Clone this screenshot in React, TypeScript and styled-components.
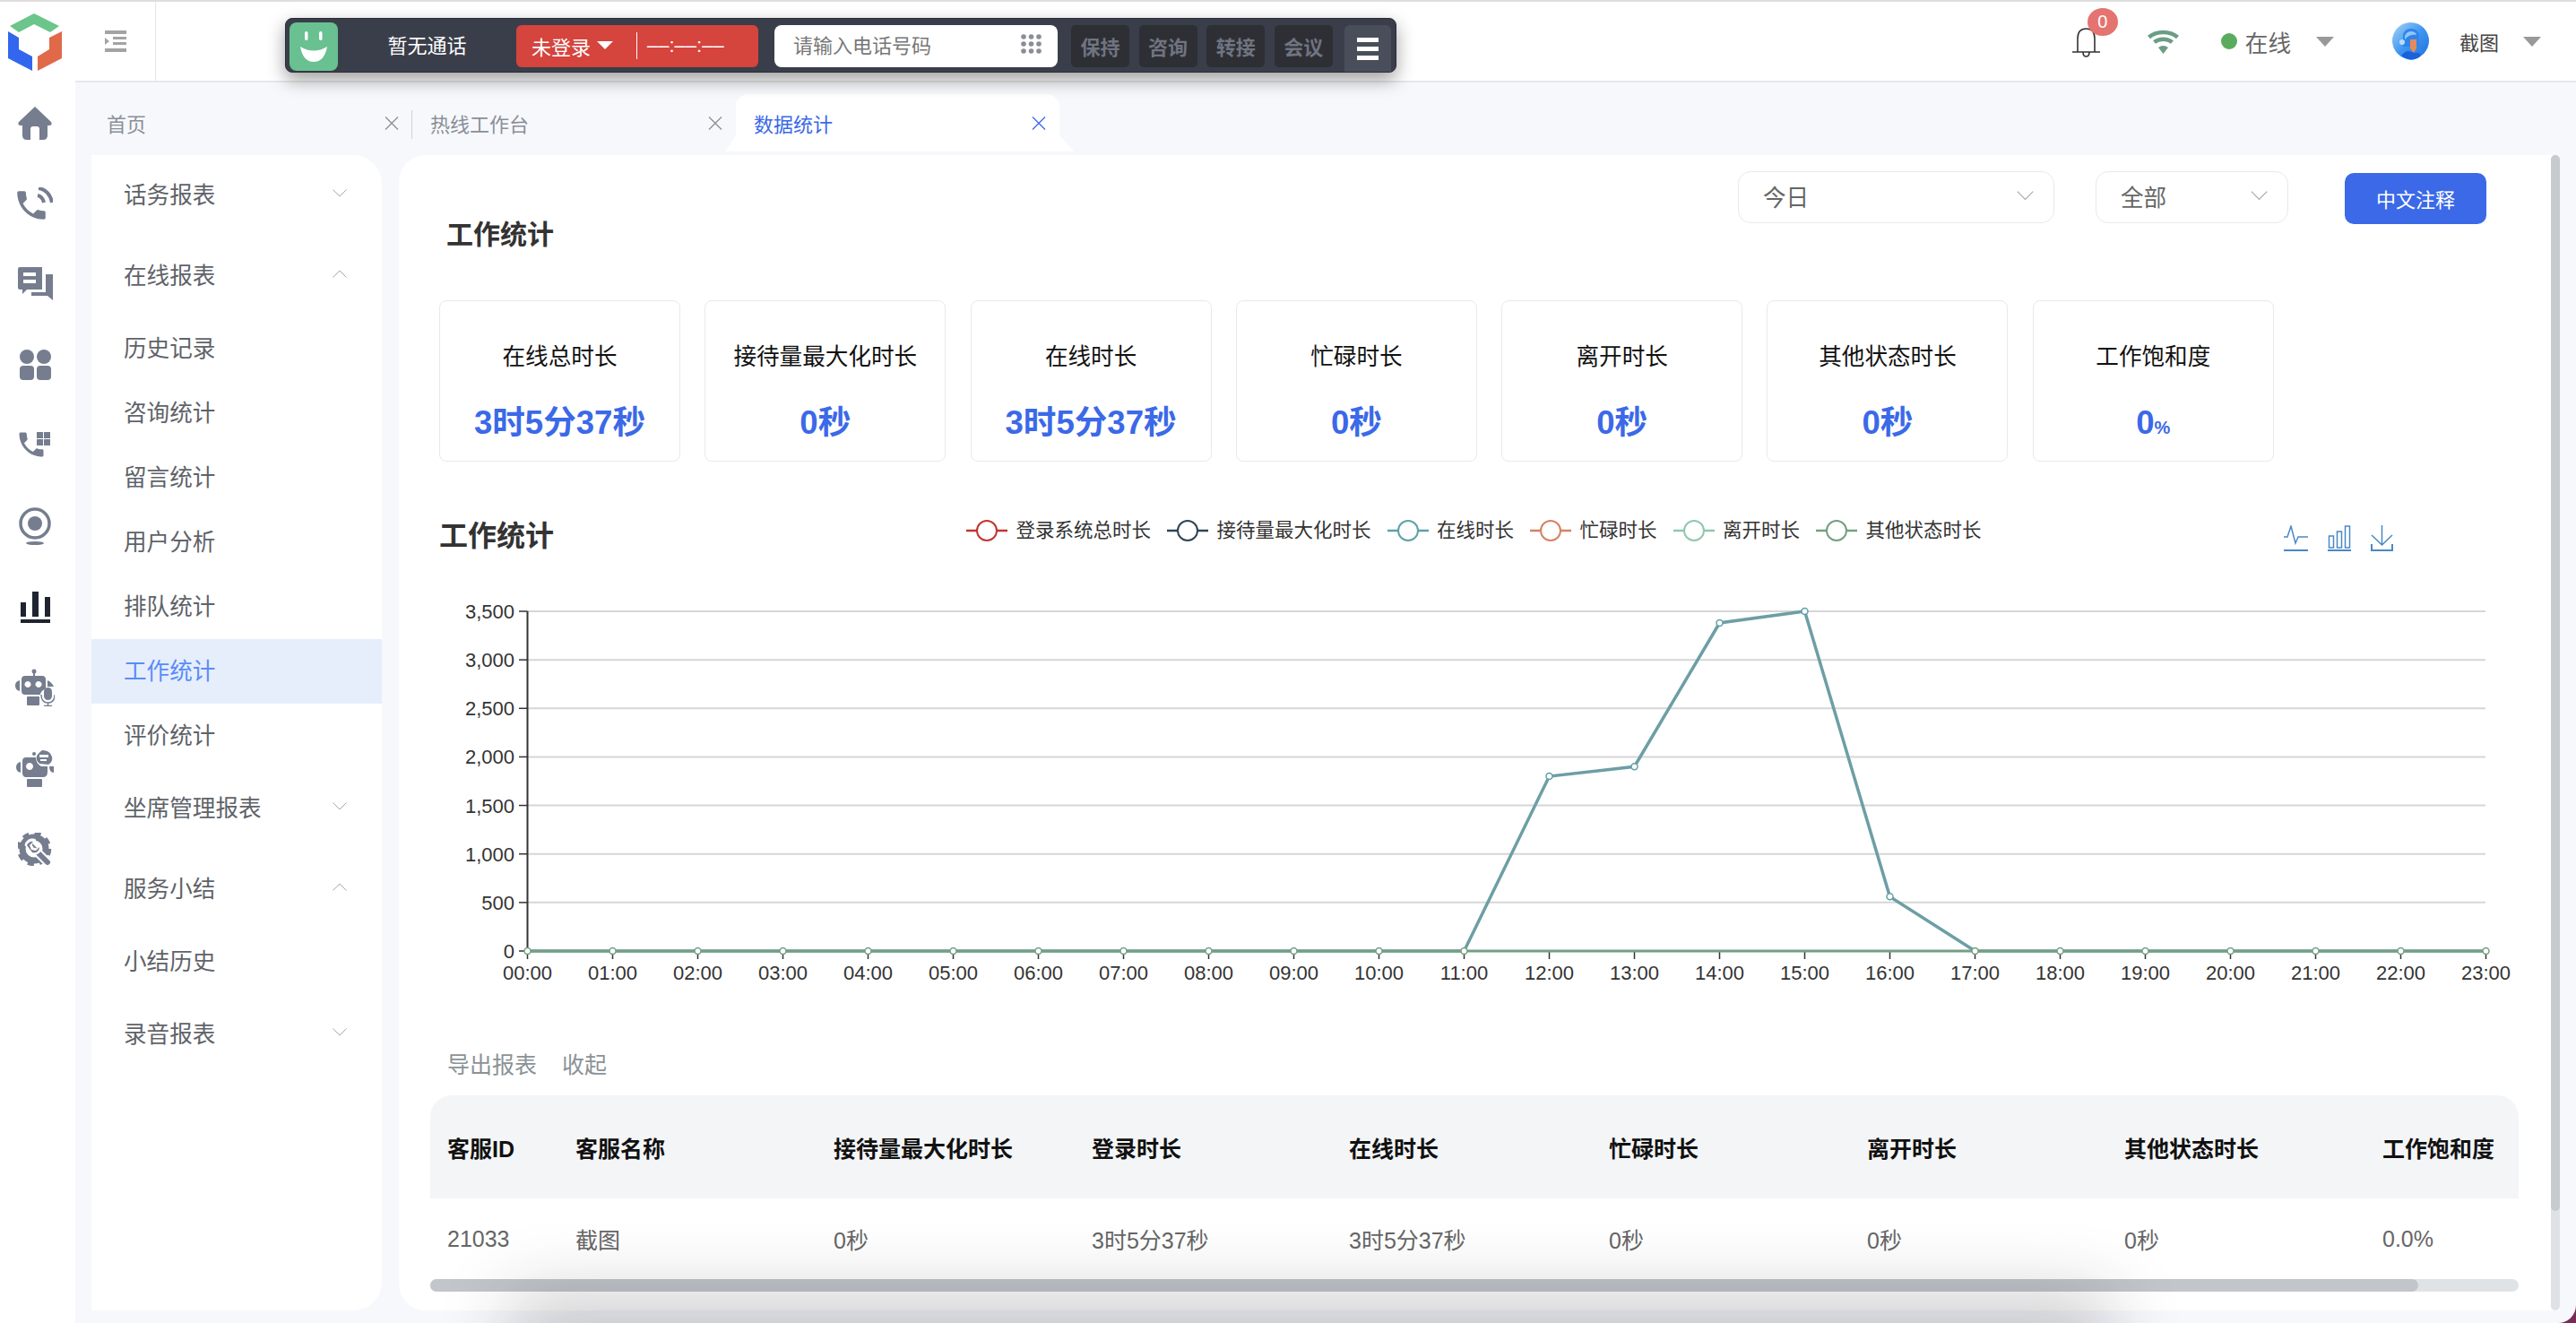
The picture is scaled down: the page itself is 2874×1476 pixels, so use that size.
import styled, { createGlobalStyle } from "styled-components";

const GlobalStyle = createGlobalStyle`
  html, body {
    margin: 0;
    padding: 0;
    background: #7a2a55;
    font-family: "Liberation Sans", "Noto Sans CJK SC", sans-serif;
  }
  * { box-sizing: border-box; }
`;

const Shell = styled.div`
  position: relative;
  width: 2874px;
  height: 1476px;
  display: flex;
  overflow: hidden;
  border-top: 2px solid #dedede;
  border-bottom-right-radius: 20px;
  background: #f7f8fc;
`;
const Rail = styled.aside`
  width: 84px;
  flex: none;
  background: #fff;
`;
const RailSlot = styled.div`
  height: 90px;
  display: flex;
  align-items: center;
  justify-content: center;
  padding-right: 6px;
`;
const Right = styled.div`
  flex: 1;
  min-width: 0;
  display: flex;
  flex-direction: column;
`;
const Header = styled.header`
  height: 90px;
  flex: none;
  display: flex;
  align-items: center;
  padding-right: 39px;
  background: #fff;
  border-bottom: 2px solid #e8e8e8;
`;
const Collapse = styled.div`
  width: 90px;
  height: 100%;
  display: flex;
  align-items: center;
  justify-content: center;
  border-right: 1px solid #e6e6e6;
`;
const PhoneBar = styled.div`
  position: relative;
  z-index: 2;
  align-self: flex-start;
  display: flex;
  align-items: center;
  width: 1240px;
  height: 61px;
  margin: 18px 0 0 144px;
  padding: 2px 0 0 4px;
  border-radius: 8px;
  background: #3a3e4a;
  border: 1px solid #2a2d36;
  box-shadow: 0 8px 20px rgba(0, 0, 0, 0.38);
`;
const Smiley = styled.div`
  width: 54px;
  height: 54px;
  flex: none;
  display: flex;
  align-items: center;
  justify-content: center;
  border-radius: 8px;
  background: #69c090;
`;
const CallState = styled.div`
  width: 199px;
  text-align: center;
  color: #fff;
  font-size: 22px;
  line-height: 30px;
`;
const LoginBox = styled.div`
  width: 270px;
  height: 47px;
  flex: none;
  display: flex;
  align-items: center;
  padding: 0 0 2px 17px;
  border-radius: 6px;
  background: #d5443d;
  color: #fff;
  font-size: 22px;
`;
const LoginCaret = styled.span`
  width: 0;
  height: 0;
  margin-left: 7px;
  border-left: 9px solid transparent;
  border-right: 9px solid transparent;
  border-top: 9px solid #fff;
`;
const LoginSplit = styled.span`
  width: 1px;
  height: 30px;
  margin: 0 11px 0 26px;
  background: #fff;
`;
const Timer = styled.span`
  font-size: 22px;
`;
const PhoneInput = styled.div`
  width: 316px;
  height: 47px;
  flex: none;
  margin-left: 18px;
  display: flex;
  align-items: center;
  justify-content: space-between;
  padding: 0 18px 6px 21px;
  border-radius: 8px;
  background: #fff;
  color: #777;
  font-size: 22px;
`;
const BarButtons = styled.div`
  display: flex;
  gap: 10.6px;
  margin-left: 15px;
`;
const BarButton = styled.div`
  width: 65px;
  height: 47px;
  display: flex;
  align-items: center;
  justify-content: center;
  padding-bottom: 2px;
  border-radius: 5px;
  background: #2e2f35;
  color: #6f7480;
  font-size: 22px;
  font-weight: 700;
`;
const MenuButton = styled.div`
  width: 52px;
  height: 52px;
  flex: none;
  align-self: flex-end;
  margin-left: 13px;
  display: flex;
  flex-direction: column;
  align-items: center;
  justify-content: center;
  gap: 5px;
  border-radius: 6px 6px 0 0;
  background: #4a4e5a;
  span {
    width: 24px;
    height: 5px;
    background: #fff;
  }
`;
const HeaderTools = styled.div`
  margin-left: auto;
  display: flex;
  align-items: center;
`;
const BellWrap = styled.div`
  position: relative;
  width: 31px;
  height: 33px;
  margin-top: 2px;
`;
const Badge = styled.span`
  position: absolute;
  left: 17px;
  top: -22px;
  width: 34px;
  height: 31px;
  border-radius: 50%;
  background: #e5736f;
  color: #fff;
  font-size: 20px;
  line-height: 31px;
  text-align: center;
`;
const IconSlot = styled.span<{ $gap: number }>`
  display: flex;
  margin-left: ${(p) => p.$gap}px;
`;
const StatusDot = styled.span`
  width: 18px;
  height: 18px;
  margin-left: 47px;
  border-radius: 50%;
  background: #5bab5f;
`;
const StatusText = styled.span`
  margin-left: 9px;
  color: #666;
  font-size: 25.6px;
`;
const Caret = styled.span<{ $gap: number }>`
  width: 0;
  height: 0;
  margin-left: ${(p) => p.$gap}px;
  border-left: 10px solid transparent;
  border-right: 10px solid transparent;
  border-top: 11px solid #999;
`;
const UserName = styled.span`
  margin-left: 33px;
  color: #444;
  font-size: 22px;
`;
const TabsRow = styled.nav`
  position: relative;
  z-index: 0;
  height: 81px;
  flex: none;
  display: flex;
  align-items: flex-start;
  padding: 13px 0 0 15px;
`;
const Tab = styled.div<{ $active?: boolean; $split?: boolean }>`
  position: relative;
  width: 361px;
  height: 64px;
  display: flex;
  align-items: center;
  justify-content: space-between;
  padding: 0 15px 0 20px;
  font-size: 22px;
  color: ${(p) => (p.$active ? "#3b69e8" : "#8a8f99")};
  background: ${(p) => (p.$active ? "#fff" : "transparent")};
  border-radius: ${(p) => (p.$active ? "14px 14px 0 0" : "0")};
  ${(p) =>
    p.$split &&
    `&::after {
      content: "";
      position: absolute;
      right: 0;
      top: 18px;
      width: 1px;
      height: 32px;
      background: #cfd2d8;
    }`}
  ${(p) =>
    p.$active &&
    `&::before {
      content: "";
      position: absolute;
      left: -12px;
      right: -16px;
      bottom: 0;
      height: 18px;
      z-index: -1;
      background: #fff;
      clip-path: polygon(0 100%, 12px 0, calc(100% - 16px) 0, 100% 100%);
    }`}
`;
const Content = styled.div`
  flex: 1;
  min-height: 0;
  display: flex;
  padding: 0 18px 14px 18px;
  gap: 19px;
`;
const SideMenu = styled.div`
  width: 324px;
  flex: none;
  display: flex;
  flex-direction: column;
  border-radius: 0 32px 32px 0;
  background: #fff;
`;
const MenuHead = styled.div`
  height: 72px;
  margin: 9px 0;
  display: flex;
  align-items: center;
  justify-content: space-between;
  padding: 0 39px 6px 36px;
  color: #5f6369;
  font-size: 25.6px;
`;
const MenuItem = styled.div<{ $active?: boolean }>`
  height: 72px;
  display: flex;
  align-items: center;
  padding: 0 0 6px 36px;
  font-size: 25.6px;
  color: ${(p) => (p.$active ? "#5a8cf8" : "#5f6369")};
  background: ${(p) => (p.$active ? "#e6eefc" : "transparent")};
`;
const MainCard = styled.main`
  position: relative;
  flex: 1;
  min-width: 0;
  padding: 18px 0 0 45px;
  border-radius: 30px 0 0 30px;
  background: #fff;
`;
const VScroll = styled.div`
  position: absolute;
  top: 0;
  right: 0;
  bottom: 0;
  width: 10px;
  border-radius: 5px;
  background: #dfe2e5;
  &::before {
    content: "";
    display: block;
    height: 1178px;
    border-radius: 5px;
    background: #c6cbcf;
  }
`;
const TopRow = styled.div`
  height: 91px;
  display: flex;
  align-items: flex-start;
  padding-right: 82px;
`;
const PageTitle = styled.h1`
  margin: 51px auto 0 8px;
  color: #333;
  font-size: 30px;
  font-weight: 600;
  line-height: 40px;
`;
const SelectBox = styled.div<{ $w: number }>`
  width: ${(p) => p.$w}px;
  height: 58px;
  margin-right: ${(p) => (p.$w > 300 ? 46 : 63)}px;
  display: flex;
  align-items: center;
  justify-content: space-between;
  padding: 0 22px 3px 27px;
  border: 1px solid #e8e8ea;
  border-radius: 14px;
  color: #666;
  font-size: 25.6px;
`;
const NoteButton = styled.div`
  width: 158px;
  height: 57px;
  margin-top: 2px;
  display: flex;
  align-items: center;
  justify-content: center;
  padding-bottom: 2px;
  border-radius: 10px;
  background: #3b69e8;
  color: #fff;
  font-size: 22px;
`;
const StatRow = styled.div`
  margin-top: 53px;
  display: flex;
  gap: 27.3px;
`;
const StatCard = styled.div`
  width: 269px;
  height: 180px;
  display: flex;
  flex-direction: column;
  align-items: center;
  padding-top: 44px;
  border: 1px solid #e9e9ec;
  border-radius: 8px;
`;
const StatLabel = styled.div`
  color: #111;
  font-size: 25.6px;
  line-height: 36px;
`;
const StatValue = styled.div`
  margin-top: 34px;
  color: #3b69e8;
  font-size: 36.6px;
  font-weight: 600;
  line-height: 44px;
  small {
    font-size: 20px;
  }
`;
const ChartHead = styled.div`
  margin-top: 55px;
  height: 60px;
  display: flex;
  align-items: center;
`;
const ChartTitle = styled.h2`
  margin: -4px 0 0 0;
  color: #333;
  font-size: 32px;
  font-weight: 600;
  line-height: 42px;
`;
const Legend = styled.div`
  margin: -16px 0 0 460px;
  display: flex;
  gap: 18px;
`;
const LegendItem = styled.div`
  display: flex;
  align-items: center;
  gap: 9.5px;
  color: #333;
  font-size: 21.5px;
  line-height: 28px;
`;
const ToolIcons = styled.div`
  margin: 0 186px 0 auto;
  display: flex;
  gap: 22px;
`;
const ChartCanvas = styled.svg`
  display: block;
  width: 2366px;
  height: 530px;
  text {
    font-family: "Liberation Sans", sans-serif;
    font-size: 22px;
    fill: #333;
  }
`;
const ExportRow = styled.div`
  margin: 11px 0 0 9px;
  display: flex;
  gap: 28px;
  color: #8a9296;
  font-size: 25px;
  line-height: 34px;
`;
const TableWrap = styled.div`
  width: 2330px;
  margin: 17px 0 0 -10px;
`;
const StatTable = styled.table`
  width: 100%;
  table-layout: fixed;
  border-collapse: collapse;
  th, td {
    padding: 0 0 0 19px;
    text-align: left;
    font-size: 25px;
    white-space: nowrap;
  }
  th {
    height: 115px;
    background: #f4f5f7;
    color: #111;
    font-weight: 700;
  }
  th:first-child { border-top-left-radius: 24px; }
  th:last-child { border-top-right-radius: 24px; }
  td {
    height: 90px;
    color: #666;
  }
`;
const HScroll = styled.div`
  height: 14px;
  border-radius: 7px;
  background: #e0e3e6;
  &::before {
    content: "";
    display: block;
    width: 2218px;
    height: 14px;
    border-radius: 7px;
    background: #c2c6cb;
  }
`;
const BottomGlow = styled.div`
  position: absolute;
  left: 620px;
  right: 570px;
  top: 1500px;
  height: 60px;
  box-shadow: 0 -8px 80px 50px rgba(30, 34, 40, 0.22);
  pointer-events: none;
`;

const handset =
  "M6.62 10.79c1.44 2.83 3.76 5.14 6.59 6.59l2.2-2.2c.27-.27.67-.36 1.02-.24 1.12.37 2.33.57 3.57.57.55 0 1 .45 1 1V20c0 .55-.45 1-1 1-9.39 0-17-7.61-17-17 0-.55.45-1 1-1h3.5c.55 0 1 .45 1 1 0 1.25.2 2.45.57 3.57.11.35.03.74-.25 1.02l-2.2 2.2z";

const railGrey = "#757d8f";

function Logo() {
  return (
    <svg width="60" height="64" viewBox="0 0 60 64">
      <path d="M29 0 57 14 47 21 29 12 12 21 2 14Z" fill="#6cc58a" />
      <path d="M0 20 12 27V40L27 48V64L0 50Z" fill="#3366ee" />
      <path d="M60 20V50L33 64V48L46 40V27Z" fill="#e0694a" />
    </svg>
  );
}

function CollapseIcon() {
  return (
    <svg width="24" height="24" viewBox="0 0 24 24" fill="#a3a3a3">
      <rect x="0" y="0" width="24" height="4" />
      <rect x="9" y="7" width="15" height="3" />
      <rect x="9" y="13" width="15" height="3" />
      <rect x="0" y="20" width="24" height="4" />
      <path d="M0 8 5 12 0 16Z" />
    </svg>
  );
}

function HomeIcon() {
  return (
    <svg width="38" height="37" viewBox="0 0 38 37" fill={railGrey}>
      <path d="M19 0 37 17Q39 21 35 21H33V32Q33 37 28 37H24V25Q24 22 21 22H17Q14 22 14 25V37H10Q5 37 5 32V21H3Q-1 21 1 17Z" />
    </svg>
  );
}

function CallRingIcon() {
  return (
    <svg width="40" height="37" viewBox="0 0 40 37" fill="none">
      <g transform="translate(-5 -1) scale(1.75)">
        <path d={handset} fill={railGrey} />
      </g>
      <path d="M23 9C27 10 29 12 30 17M24 1C32 2 38 9 39 17" stroke={railGrey} strokeWidth="4" />
    </svg>
  );
}

function ChatIcon() {
  return (
    <svg width="39" height="38" viewBox="0 0 39 38" fill={railGrey}>
      <path
        fillRule="evenodd"
        d="M2 0H27V25H10L5 30V25H2Q0 25 0 23V2Q0 0 2 0ZM6 6V10H20V6ZM6 14V18H20V14Z"
      />
      <path d="M31 8H39V37L33 32H15V28H31Z" />
    </svg>
  );
}

function AppsIcon() {
  return (
    <svg width="35" height="34" viewBox="0 0 35 34" fill={railGrey}>
      <circle cx="8" cy="8" r="8" />
      <circle cx="27" cy="8" r="8" />
      <rect x="0" y="18" width="16" height="16" rx="4" />
      <rect x="19" y="18" width="16" height="16" rx="4" />
    </svg>
  );
}

function CallGridIcon() {
  return (
    <svg width="36" height="32" viewBox="0 0 36 32" fill={railGrey}>
      <g transform="translate(-4 -3) scale(1.5)">
        <path d={handset} />
      </g>
      <rect x="20" y="1" width="7" height="7" />
      <rect x="28" y="1" width="7" height="7" />
      <rect x="20" y="9" width="7" height="7" />
      <rect x="28" y="9" width="7" height="7" />
    </svg>
  );
}

function CameraIcon() {
  return (
    <svg width="36" height="42" viewBox="0 0 36 42" fill={railGrey}>
      <circle cx="18" cy="18" r="16" fill="none" stroke={railGrey} strokeWidth="3.5" />
      <circle cx="18" cy="18" r="8" />
      <ellipse cx="18" cy="40" rx="10" ry="2" />
    </svg>
  );
}

function BarsIcon() {
  return (
    <svg width="33" height="35" viewBox="0 0 33 35" fill="#1f2430">
      <rect x="0" y="12" width="6" height="16" />
      <rect x="13" y="0" width="7" height="28" />
      <rect x="27" y="6" width="6" height="22" />
      <rect x="0" y="31" width="33" height="4" />
    </svg>
  );
}

function RobotMicIcon() {
  return (
    <svg width="44" height="42" viewBox="0 0 44 42" fill={railGrey}>
      <circle cx="21" cy="3" r="2.5" />
      <rect x="20" y="4" width="2" height="5" />
      <path
        fillRule="evenodd"
        d="M11 8H30Q34 8 34 12V22Q30 24 28 28V29H11Q7 29 7 25V12Q7 8 11 8ZM14 14A3.5 3.5 0 1 0 14.01 14ZM26 14A3.5 3.5 0 1 0 26.01 14Z"
      />
      <path d="M5 13V25Q0 24 0 19T5 13ZM36 13Q40 14 43 20H36Z" />
      <rect x="13" y="31" width="14" height="10" rx="1" />
      <rect x="32" y="21" width="9" height="14" rx="4.5" />
      <path d="M29 29Q29 38 36.5 38T44 29M36.5 38V41M32 41.5H41" fill="none" stroke={railGrey} strokeWidth="1.5" />
    </svg>
  );
}

function RobotChatIcon() {
  return (
    <svg width="42" height="41" viewBox="0 0 42 41" fill={railGrey}>
      <path
        fillRule="evenodd"
        d="M11 8H22Q22 15 28 18H35V24Q35 30 30 30H11Q7 30 7 25V12Q7 8 11 8ZM15 14A4 4 0 1 0 15.01 14Z"
      />
      <path d="M5 13V25Q0 24 0 19T5 13ZM37 18H42V25Q37 25 37 18Z" />
      <rect x="12" y="32" width="17" height="9" rx="1" />
      <circle cx="20" cy="4" r="2" />
      <path
        fillRule="evenodd"
        d="M29 0A11 9 0 0 1 36 16L26 15Q18 8 29 0ZM26 5V8H36V5ZM27 10V12H34V10Z"
      />
    </svg>
  );
}

function ToolGearIcon() {
  return (
    <svg width="38" height="37" viewBox="0 0 38 37" fill="none">
      <circle cx="18" cy="18" r="17" stroke={railGrey} strokeWidth="4.5" strokeDasharray="7 6.35" />
      <circle cx="18" cy="18" r="13" stroke={railGrey} strokeWidth="7" />
      <path d="M14 14 33 33" stroke="#fff" strokeWidth="10" />
      <path d="M15 15 33 33" stroke={railGrey} strokeWidth="6" strokeLinecap="round" />
      <path d="M8 14A8 8 0 0 1 20 8L15 13 17 17 21 18 26 14A8 8 0 0 1 16 24Z" fill="#fff" stroke="#fff" />
      <path d="M10 14A6 6 0 0 1 17 10L13 14 15 19 20 20 24 16A6 6 0 0 1 16 22Z" fill={railGrey} />
    </svg>
  );
}

function SmileFace() {
  return (
    <svg width="32" height="38" viewBox="0 0 32 38" fill="#fff">
      <rect x="6" y="2" width="3.5" height="10" rx="1.7" />
      <rect x="22" y="2" width="3.5" height="10" rx="1.7" />
      <path d="M1 19Q16 28 31 19Q28 36 16 36T1 19Z" />
    </svg>
  );
}

function DialDots() {
  const dots = [0, 1, 2].flatMap((r) => [0, 1, 2].map((c) => [c, r]));
  return (
    <svg width="23" height="22" viewBox="0 0 23 22" fill="#8b8d96">
      {dots.map(([c, r]) => (
        <circle key={`${c}-${r}`} cx={3 + c * 8.5} cy={3 + r * 8} r="2.8" />
      ))}
    </svg>
  );
}

function BellIcon() {
  return (
    <svg width="31" height="33" viewBox="0 0 31 33" fill="none" stroke="#333" strokeWidth="1.6">
      <path d="M6 27V12Q6 1 15.5 1T25 12V27M0 27H31M12 27Q12 32 15.5 32T19 27" />
    </svg>
  );
}

function WifiIcon() {
  return (
    <svg width="35" height="27" viewBox="0 0 35 27" fill="none" stroke="#6b9d85" strokeWidth="4.5">
      <path d="M1.5 8.5C10 1 25 1 33.5 8.5" />
      <path d="M7.5 14C13 9.5 22 9.5 27.5 14" />
      <path d="M17.5 27 12 20Q17.5 16 23 20Z" fill="#6b9d85" stroke="none" />
    </svg>
  );
}

function AvatarPic() {
  return (
    <svg width="43" height="43" viewBox="0 0 43 43">
      <defs>
        <linearGradient id="avatarBlue" x1="0" y1="0" x2="1" y2="1">
          <stop offset="0" stopColor="#a9d4f8" />
          <stop offset="0.5" stopColor="#3f97f0" />
          <stop offset="1" stopColor="#1f6fe0" />
        </linearGradient>
      </defs>
      <circle cx="21.5" cy="20.5" r="20.5" fill="url(#avatarBlue)" />
      <path d="M13 15Q14 7 22 7T31 15V27H13Z" fill="#2f84ea" />
      <path d="M15 15Q17 10 22 10T28 14Q20 13 15 19Z" fill="#8fc6f6" />
      <path d="M21 19H28V29L25 34 21 29Z" fill="#e58a5c" />
      <path d="M11 37Q17 30 22 33L27 34Q33 33 32 38Q22 46 11 37Z" fill="#1a62da" />
      <circle cx="12" cy="22" r="3" fill="#b9dcf9" />
    </svg>
  );
}

function Chevron({ up, w = 16 }: { up?: boolean; w?: number }) {
  return (
    <svg width={w} height={w / 2 + 1} viewBox="0 0 16 9" fill="none" stroke="#a5a8ad" strokeWidth="1">
      <path d={up ? "M0.5 8.5 8 1 15.5 8.5" : "M0.5 0.5 8 8 15.5 0.5"} />
    </svg>
  );
}

function CloseX({ color }: { color: string }) {
  return (
    <svg width="16" height="15" viewBox="0 0 16 15" fill="none" stroke={color} strokeWidth="1.3">
      <path d="M1 0.5 15 14.5M15 0.5 1 14.5" />
    </svg>
  );
}

function LegendMark({ color }: { color: string }) {
  return (
    <svg width="46" height="24" viewBox="0 0 46 24" fill="none" stroke={color} strokeWidth="2">
      <path d="M0 12H12M34 12H46" strokeWidth="2.5" />
      <circle cx="23" cy="12" r="11" fill="#fff" />
    </svg>
  );
}

function LineTool() {
  return (
    <svg width="27" height="29" viewBox="0 0 27 29" fill="none" stroke="#4a88c7" strokeWidth="1.5">
      <path d="M0 13H4L8 1 13 20 16 13H27" />
      <path d="M0 28H27" strokeWidth="2" />
    </svg>
  );
}
function BarTool() {
  return (
    <svg width="26" height="29" viewBox="0 0 26 29" fill="none" stroke="#4a88c7" strokeWidth="1.5">
      <rect x="1.5" y="12" width="5" height="13" />
      <rect x="10.5" y="7" width="5" height="18" />
      <rect x="19.5" y="1" width="5" height="24" />
      <path d="M0 28H26" strokeWidth="2" />
    </svg>
  );
}
function SaveTool() {
  return (
    <svg width="25" height="29" viewBox="0 0 25 29" fill="none" stroke="#4a88c7" strokeWidth="1.5">
      <path d="M12.5 0V21M1 11 12.5 22 24 11" />
      <path d="M1 21V28H24V21" strokeWidth="2" />
    </svg>
  );
}

const menu: { label: string; open?: boolean; items?: string[]; current?: string }[] = [
  { label: "话务报表" },
  { label: "在线报表", open: true, items: ["历史记录", "咨询统计", "留言统计", "用户分析", "排队统计", "工作统计", "评价统计"], current: "工作统计" },
  { label: "坐席管理报表" },
  { label: "服务小结", open: true, items: ["小结历史"] },
  { label: "录音报表" },
];

const stats: [string, string][] = [
  ["在线总时长", "3时5分37秒"],
  ["接待量最大化时长", "0秒"],
  ["在线时长", "3时5分37秒"],
  ["忙碌时长", "0秒"],
  ["离开时长", "0秒"],
  ["其他状态时长", "0秒"],
];

const legend: [string, string][] = [
  ["登录系统总时长", "#c23531"],
  ["接待量最大化时长", "#2f4554"],
  ["在线时长", "#61a0a8"],
  ["忙碌时长", "#d48265"],
  ["离开时长", "#91c7ae"],
  ["其他状态时长", "#749f83"],
];

const hours = Array.from({ length: 24 }, (_, i) => `${String(i).padStart(2, "0")}:00`);
const online = [0, 0, 0, 0, 0, 0, 0, 0, 0, 0, 0, 0, 1800, 1900, 3380, 3500, 560, 0, 0, 0, 0, 0, 0, 0];
const ticks = [0, 500, 1000, 1500, 2000, 2500, 3000, 3500];

const chartX = (i: number) => 98.5 + i * 95;
const chartY = (v: number) => 52 + ((3500 - v) * 379) / 3500;

function WorkChart() {
  const line = online.map((v, i) => `${chartX(i)},${chartY(v)}`).join(" ");
  return (
    <ChartCanvas viewBox="0 0 2366 530">
      {ticks.map((t) => (
        <g key={t}>
          {t > 0 && <path d={`M98.5 ${chartY(t)}H2283`} stroke="#d6d6d6" strokeWidth="2" />}
          <path d={`M89 ${chartY(t)}H98.5`} stroke="#333" strokeWidth="1.5" />
          <text x="84" y={chartY(t) + 8} textAnchor="end">
            {t.toLocaleString("en-US")}
          </text>
        </g>
      ))}
      <path d={`M98.5 52V431`} stroke="#333" strokeWidth="2" />
      {hours.map((h, i) => (
        <g key={h}>
          <path d={`M${chartX(i)} 431V440`} stroke="#333" strokeWidth="1.5" />
          <text x={chartX(i)} y="463" textAnchor="middle">
            {h}
          </text>
        </g>
      ))}
      <polyline points={line} fill="none" stroke="#6d9ea5" strokeWidth="3.5" />
      <path d="M98.5 431H2283" stroke="#749f83" strokeWidth="3" />
      {online.map((v, i) => (
        <circle key={i} cx={chartX(i)} cy={chartY(v)} r="3.5" fill="#fff" stroke={v > 0 ? "#61a0a8" : "#749f83"} strokeWidth="1.5" />
      ))}
    </ChartCanvas>
  );
}

const columns = ["客服ID", "客服名称", "接待量最大化时长", "登录时长", "在线时长", "忙碌时长", "离开时长", "其他状态时长", "工作饱和度"];
const widths = [143, 288, 288, 287, 290, 288, 287, 288, 171];
const row = ["21033", "截图", "0秒", "3时5分37秒", "3时5分37秒", "0秒", "0秒", "0秒", "0.0%"];

export default function App() {
  return (
    <>
      <GlobalStyle />
      <Shell>
        <Rail>
          <RailSlot><Logo /></RailSlot>
          <RailSlot><HomeIcon /></RailSlot>
          <RailSlot><CallRingIcon /></RailSlot>
          <RailSlot><ChatIcon /></RailSlot>
          <RailSlot><AppsIcon /></RailSlot>
          <RailSlot><CallGridIcon /></RailSlot>
          <RailSlot><CameraIcon /></RailSlot>
          <RailSlot><BarsIcon /></RailSlot>
          <RailSlot><RobotMicIcon /></RailSlot>
          <RailSlot><RobotChatIcon /></RailSlot>
          <RailSlot><ToolGearIcon /></RailSlot>
        </Rail>
        <Right>
          <Header>
            <Collapse><CollapseIcon /></Collapse>
            <PhoneBar>
              <Smiley><SmileFace /></Smiley>
              <CallState>暂无通话</CallState>
              <LoginBox>
                未登录
                <LoginCaret />
                <LoginSplit />
                <Timer>––:––:––</Timer>
              </LoginBox>
              <PhoneInput>
                请输入电话号码
                <DialDots />
              </PhoneInput>
              <BarButtons>
                <BarButton>保持</BarButton>
                <BarButton>咨询</BarButton>
                <BarButton>转接</BarButton>
                <BarButton>会议</BarButton>
              </BarButtons>
              <MenuButton>
                <span />
                <span />
                <span />
              </MenuButton>
            </PhoneBar>
            <HeaderTools>
              <BellWrap>
                <BellIcon />
                <Badge>0</Badge>
              </BellWrap>
              <IconSlot $gap={53}><WifiIcon /></IconSlot>
              <StatusDot />
              <StatusText>在线</StatusText>
              <Caret $gap={28} />
              <IconSlot $gap={64}><AvatarPic /></IconSlot>
              <UserName>截图</UserName>
              <Caret $gap={27} />
            </HeaderTools>
          </Header>
          <TabsRow>
            <Tab $split>首页<CloseX color="#8a8f99" /></Tab>
            <Tab>热线工作台<CloseX color="#8a8f99" /></Tab>
            <Tab $active>数据统计<CloseX color="#3b69e8" /></Tab>
          </TabsRow>
          <Content>
            <SideMenu>
              {menu.map((group) => (
                <div key={group.label}>
                  <MenuHead>
                    {group.label}
                    <Chevron up={group.open} />
                  </MenuHead>
                  {group.items?.map((item) => (
                    <MenuItem key={item} $active={item === group.current}>{item}</MenuItem>
                  ))}
                </div>
              ))}
            </SideMenu>
            <MainCard>
              <VScroll />
              <TopRow>
                <PageTitle>工作统计</PageTitle>
                <SelectBox $w={353}>今日<Chevron w={19} /></SelectBox>
                <SelectBox $w={215}>全部<Chevron w={19} /></SelectBox>
                <NoteButton>中文注释</NoteButton>
              </TopRow>
              <StatRow>
                {stats.map(([label, value]) => (
                  <StatCard key={label}>
                    <StatLabel>{label}</StatLabel>
                    <StatValue>{value}</StatValue>
                  </StatCard>
                ))}
                <StatCard>
                  <StatLabel>工作饱和度</StatLabel>
                  <StatValue>0<small>%</small></StatValue>
                </StatCard>
              </StatRow>
              <ChartHead>
                <ChartTitle>工作统计</ChartTitle>
                <Legend>
                  {legend.map(([name, color]) => (
                    <LegendItem key={name}>
                      <LegendMark color={color} />
                      {name}
                    </LegendItem>
                  ))}
                </Legend>
                <ToolIcons>
                  <LineTool />
                  <BarTool />
                  <SaveTool />
                </ToolIcons>
              </ChartHead>
              <WorkChart />
              <ExportRow>
                <span>导出报表</span>
                <span>收起</span>
              </ExportRow>
              <TableWrap>
                <StatTable>
                  <colgroup>
                    {widths.map((w, i) => (
                      <col key={i} width={w} />
                    ))}
                  </colgroup>
                  <thead>
                    <tr>
                      {columns.map((c) => (
                        <th key={c}>{c}</th>
                      ))}
                    </tr>
                  </thead>
                  <tbody>
                    <tr>
                      {row.map((c, i) => (
                        <td key={i}>{c}</td>
                      ))}
                    </tr>
                  </tbody>
                </StatTable>
                <HScroll />
              </TableWrap>
            </MainCard>
          </Content>
        </Right>
        <BottomGlow />
      </Shell>
    </>
  );
}
